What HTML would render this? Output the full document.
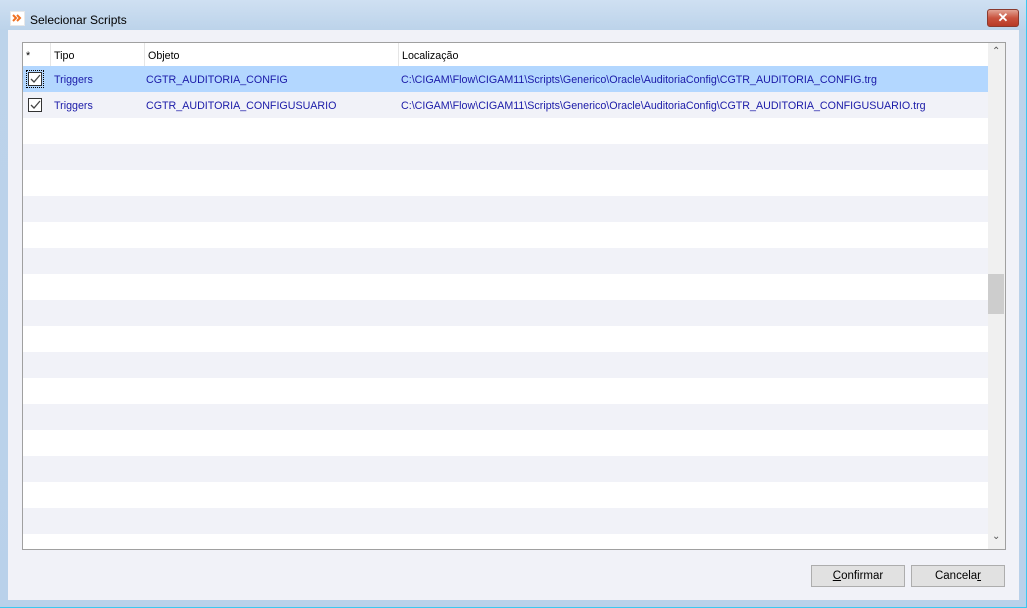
<!DOCTYPE html>
<html><head><style>
body{margin:0;width:1027px;height:608px;overflow:hidden;background:#b9d1ea;font-family:"Liberation Sans",sans-serif;font-size:10.7px;position:relative}
.frame{position:absolute;left:0;top:0;width:1026px;height:607px;background:linear-gradient(#cfe0f2,#bcd3ea 30px,#b9d1ea);border-right:1px solid #3cc8f0;border-bottom:1px solid #3cc8f0}
.title{position:absolute;left:30px;top:12px;font-size:12px;color:#000}
.icon{position:absolute;left:10px;top:11px;width:13px;height:13px;background:#fff;border:1px solid #e8e8e8}
.close{position:absolute;left:987px;top:9px;width:30px;height:16px;border:1px solid #8a3a2e;border-radius:3px;background:linear-gradient(#e2a394,#c9533e 50%,#b83a26);color:#fff;font-size:13px;font-weight:bold;text-align:center;line-height:16px}
.client{position:absolute;left:8px;top:30px;width:1011px;height:570px;background:#f1f2f8}
.grid{position:absolute;left:22px;top:42px;width:982px;height:506px;border:1px solid #a0a0a0;background:#fff;overflow:hidden}
.row{position:absolute;left:0;width:965px;height:26px;line-height:28px}
.g{background:#f1f2f8}
.sel{background:#b3d7ff}
.cell{position:absolute;top:0;color:#1a1aa8;white-space:nowrap}
.hd{position:absolute;top:0;height:23px;line-height:26px;color:#000;border-left:1px solid #e5e5e5;padding-left:3px}
.cb{position:absolute;left:5px;top:6px;width:12px;height:12px;border:1px solid #333;background:#fff}
.cb svg{position:absolute;left:0;top:0}
.sb{position:absolute;left:965px;top:0;width:17px;height:506px;background:#f0f0f0}
.btn{position:absolute;top:565px;width:92px;height:20px;border:1px solid #adadad;background:#e1e1e1;text-align:center;line-height:21px;font-size:11.5px}
</style></head><body>
<div class="frame"></div>
<div class="icon"><svg width="13" height="13"><path d="M2 3l3 3-3 3M6 3l3 3-3 3" stroke="#f07020" stroke-width="2" fill="none"/></svg></div>
<div class="title" style="top:13px">Selecionar Scripts</div>
<div class="close">✕</div>
<div class="client"></div>
<div class="grid">
<div class="hd" style="left:0;border:none">*</div>
<div class="hd" style="left:27px">Tipo</div>
<div class="hd" style="left:121px">Objeto</div>
<div class="hd" style="left:375px">Localização</div>
<div class="row sel" style="top:23px"><div class="cb" style="outline:1px dotted #000;outline-offset:1px"><svg width="12" height="12"><path d="M2 6l3 3 6-7" stroke="#444" stroke-width="1.3" fill="none"/></svg></div><span class="cell" style="left:31px">Triggers</span><span class="cell" style="left:123px">CGTR_AUDITORIA_CONFIG</span><span class="cell" style="left:378px">C:\CIGAM\Flow\CIGAM11\Scripts\Generico\Oracle\AuditoriaConfig\CGTR_AUDITORIA_CONFIG.trg</span></div>
<div class="row g" style="top:49px"><div class="cb"><svg width="12" height="12"><path d="M2 6l3 3 6-7" stroke="#444" stroke-width="1.3" fill="none"/></svg></div><span class="cell" style="left:31px">Triggers</span><span class="cell" style="left:123px">CGTR_AUDITORIA_CONFIGUSUARIO</span><span class="cell" style="left:378px">C:\CIGAM\Flow\CIGAM11\Scripts\Generico\Oracle\AuditoriaConfig\CGTR_AUDITORIA_CONFIGUSUARIO.trg</span></div>
<div class="row g" style="top:101px"></div>
<div class="row g" style="top:153px"></div>
<div class="row g" style="top:205px"></div>
<div class="row g" style="top:257px"></div>
<div class="row g" style="top:309px"></div>
<div class="row g" style="top:361px"></div>
<div class="row g" style="top:413px"></div>
<div class="row g" style="top:465px"></div>
<div class="sb"><div style="position:absolute;left:4px;top:3px;font-size:10px;color:#555">&#8963;</div><div style="position:absolute;left:0;top:231px;width:16px;height:40px;background:#cdcdcd"></div><div style="position:absolute;left:4px;top:488px;font-size:10px;color:#555">&#8964;</div></div>
</div>
<div class="btn" style="left:811px"><u>C</u>onfirmar</div>
<div class="btn" style="left:911px">Cancela<u>r</u></div>
</body></html>
